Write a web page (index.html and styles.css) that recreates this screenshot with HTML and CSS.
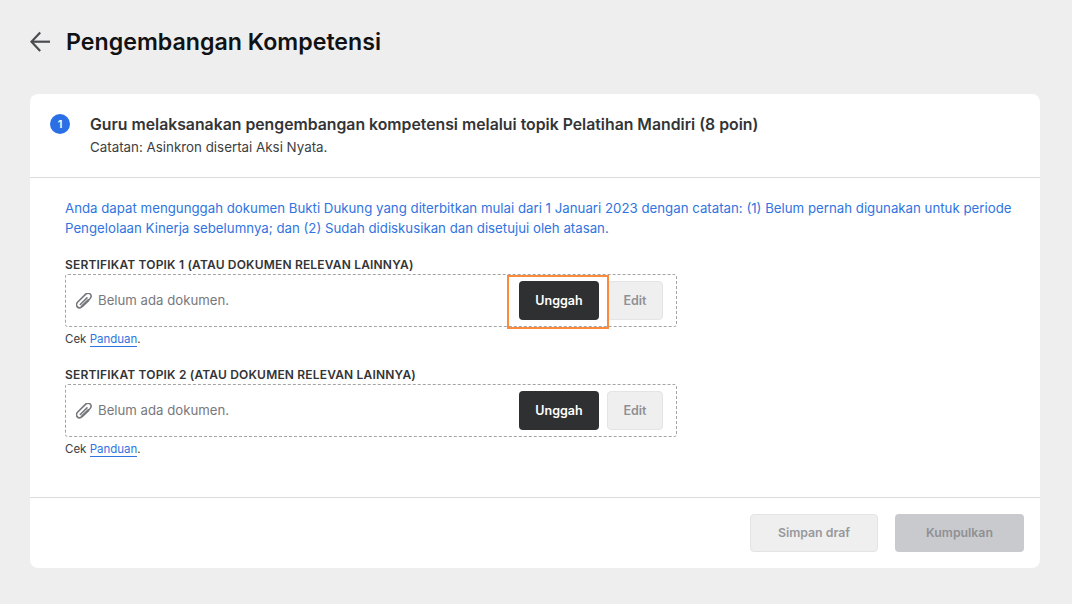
FILE: index.html
```html
<!DOCTYPE html>
<html lang="id">
<head>
<meta charset="utf-8">
<title>Pengembangan Kompetensi</title>
<link rel="stylesheet" href="styles.css">
</head>
<body>
<main class="page">
  <header class="topbar">
    <svg class="back" width="24" height="24" viewBox="0 0 24 24" fill="none" stroke="#4b4c50" stroke-width="2.2"><path d="M22 11.700H4"/><path d="M12.200 2.500 3.500 11.700l8.700 9.200"/></svg>
    <h1 class="title">Pengembangan Kompetensi</h1>
  </header>
  <section class="card">
    <div class="card-head">
      <span class="badge">1</span>
      <div class="head-text">
        <h2 class="task">Guru melaksanakan pengembangan kompetensi melalui topik Pelatihan Mandiri (8 poin)</h2>
        <p class="note">Catatan: Asinkron disertai Aksi Nyata.</p>
      </div>
    </div>
    <div class="card-body">
      <p class="info">Anda dapat mengunggah dokumen Bukti Dukung yang diterbitkan mulai dari 1 Januari 2023 dengan catatan: (1) Belum pernah digunakan untuk periode Pengelolaan Kinerja sebelumnya; dan (2) Sudah didiskusikan dan disetujui oleh atasan.</p>
      <div class="field">
        <div class="label">SERTIFIKAT TOPIK 1 (ATAU DOKUMEN RELEVAN LAINNYA)</div>
        <div class="drop">
          <svg class="clip" width="16" height="16" viewBox="1.500 1.500 13 13" fill="none" stroke="#75767b" stroke-width="1.300" stroke-linecap="round"><path d="M5 13.500 12.800 6.200c1.300-1.300 1.300-2.900.2-3.900s-2.500-.9-3.800.3L3.100 8.600c-1.200 1.200-1.600 3-.5 4.200s2.900.9 4.100-.3l5.200-5"/><path d="M5 10.800 10.400 5.500M6.500 12 11.500 7"/></svg>
          <span class="empty">Belum ada dokumen.</span>
          <span class="highlight"></span>
          <button class="btn dark">Unggah</button>
          <button class="btn edit">Edit</button>
        </div>
        <p class="hint">Cek <a class="link">Panduan</a>.</p>
      </div>
      <div class="field">
        <div class="label">SERTIFIKAT TOPIK 2 (ATAU DOKUMEN RELEVAN LAINNYA)</div>
        <div class="drop">
          <svg class="clip" width="16" height="16" viewBox="1.500 1.500 13 13" fill="none" stroke="#75767b" stroke-width="1.300" stroke-linecap="round"><path d="M5 13.500 12.800 6.200c1.300-1.300 1.300-2.900.2-3.900s-2.500-.9-3.800.3L3.100 8.600c-1.200 1.200-1.600 3-.5 4.200s2.900.9 4.100-.3l5.200-5"/><path d="M5 10.800 10.400 5.500M6.500 12 11.500 7"/></svg>
          <span class="empty">Belum ada dokumen.</span>
          <button class="btn dark">Unggah</button>
          <button class="btn edit">Edit</button>
        </div>
        <p class="hint">Cek <a class="link">Panduan</a>.</p>
      </div>
    </div>
    <footer class="card-foot">
      <button class="btn draft">Simpan draf</button>
      <button class="btn submit">Kumpulkan</button>
    </footer>
  </section>
</main>
</body>
</html>
```
FILE: styles.css
```css
* { box-sizing: border-box; }
html, body { margin: 0; height: 100%; }
body { background: #eeeeee; font-family: Inter, "Liberation Sans", sans-serif; color: #2f3032; overflow: hidden; }
.page { padding: 24px 32px 0 30px; }
.topbar { display: flex; align-items: center; gap: 14px; height: 36px; margin-bottom: 34px; }
.back { flex: none; margin-left: -2px; }
.title { margin: 0; font-size: 23.2px; line-height: 36px; font-weight: 600; color: #111214; }
.card { background: #fff; border-radius: 8px; height: 474px; display: flex; flex-direction: column; }
.card-head { display: flex; gap: 20px; padding: 20px 20px 0; height: 84px; border-bottom: 1px solid #dcdcde; }
.badge { flex: none; width: 20px; height: 20px; border-radius: 50%; background: #2b6fe6; color: #fff; font-size: 11px; font-weight: 600; display: flex; align-items: center; justify-content: center; }
.head-text { padding-top: 1px; }
.task { margin: 0; font-size: 15.8px; line-height: 20px; font-weight: 600; color: #333436; }
.note { margin: 2px 0 0; font-size: 13.35px; line-height: 20px; color: #3d3e41; }
.card-body { flex: 1; padding: 20px 24px 0 35px; }
.info { margin: 0 0 17px; font-size: 13.25px; line-height: 20px; color: #2f74e0; }
.field { width: 612px; margin-bottom: 17px; }
.label { font-size: 12px; line-height: 19px; font-weight: 600; letter-spacing: 0.18px; color: #333436; }
.drop { position: relative; display: flex; align-items: center; height: 53px; padding: 0 13px 0 10px; border: 1px dashed #a3a4a8; border-radius: 3px; }
.clip { flex: none; }
.empty { flex: 1; margin-left: 6px; padding-bottom: 2px; font-size: 13.2px; color: #77787d; }
.btn { font-family: inherit; font-size: 12.5px; font-weight: 600; border-radius: 4px; height: 39px; padding: 0; border: 1px solid transparent; }
.dark { width: 80px; background: #2f3032; color: #fff; margin-right: 8px; }
.edit { width: 56px; background: #efefef; color: #8f9095; border-color: #e4e4e6; }
.highlight { position: absolute; left: 441px; top: 0; width: 102px; height: 54px; border: 2px solid #fb8a3c; }
.hint { margin: 3px 0 0; font-size: 11.5px; line-height: 18px; color: #3d3e41; }
.link { color: #2f74e0; border-bottom: 1px solid #2f74e0; }
.card-foot { display: flex; justify-content: flex-end; gap: 17px; height: 71px; padding: 15.500px 16px 0 0; border-top: 1px solid #dcdcde; }
.card-foot .btn { height: 38px; font-size: 12.3px; }
.draft { width: 128px; background: #efefef; color: #97989c; border-color: #e4e4e6; }
.submit { width: 129px; background: #c9cacd; color: #8f9094; }
```
